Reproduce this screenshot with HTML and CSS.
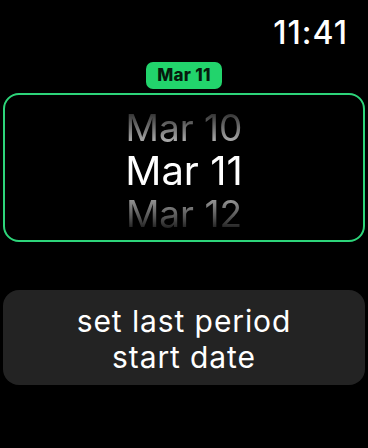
FILE: index.html
```html
<!DOCTYPE html>
<html>
<head>
<meta charset="utf-8">
<link rel="stylesheet" href="styles.css">
</head>
<body>
<div class="screen">
  <div class="status"><span class="time">11:41</span></div>
  <div class="badge-row"><span class="badge">Mar 11</span></div>
  <div class="picker">
    <div class="wheel">
      <div class="item side">Mar 10</div>
      <div class="item current">Mar 11</div>
      <div class="item side">Mar 12</div>
    </div>
  </div>
  <button class="action">set last period<br>start date</button>
</div>
</body>
</html>
```
FILE: styles.css
```css
html, body {
  margin: 0;
  padding: 0;
  background: #000;
}
.screen {
  width: 368px;
  height: 448px;
  background: #000;
  color: #fff;
  font-family: Inter, "Noto Sans", sans-serif;
  display: flex;
  flex-direction: column;
  overflow: hidden;
}
.status {
  display: flex;
  justify-content: flex-end;
  padding: 14px 20px 0 0;
}
.time {
  font-size: 32px;
  line-height: 37px;
  font-weight: 500;
  letter-spacing: 1px;
}
.badge-row {
  display: flex;
  justify-content: center;
  margin-top: 11px;
}
.badge {
  background: #22d46c;
  color: #061a0d;
  font-weight: 800;
  font-size: 17px;
  line-height: 27px;
  height: 27px;
  padding: 0 11px;
  border-radius: 7px;
  letter-spacing: 0.3px;
}
.picker {
  margin: 4px 3px 0;
  height: 149px;
  box-sizing: border-box;
  border: 2.5px solid #2dd57a;
  border-radius: 16px;
  overflow: hidden;
}
.wheel {
  height: 100%;
  box-sizing: border-box;
  padding-top: 6px;
  display: flex;
  flex-direction: column;
  align-items: center;
  justify-content: center;
  -webkit-mask-image: linear-gradient(to bottom, rgba(0,0,0,0.1) 8%, rgba(0,0,0,0.45) 18%, rgba(0,0,0,0.9) 32%, #000 40%, #000 60%, rgba(0,0,0,0.9) 68%, rgba(0,0,0,0.45) 84%, rgba(0,0,0,0.1) 94%);
  mask-image: linear-gradient(to bottom, rgba(0,0,0,0.1) 8%, rgba(0,0,0,0.45) 18%, rgba(0,0,0,0.9) 32%, #000 40%, #000 60%, rgba(0,0,0,0.9) 68%, rgba(0,0,0,0.45) 84%, rgba(0,0,0,0.1) 94%);
}
.item {
  flex-shrink: 0;
  height: 43px;
  line-height: 43px;
  white-space: nowrap;
}
.current {
  font-size: 40px;
  color: #fff;
}
.side {
  font-size: 37px;
  color: #bdbdbd;
}
.action {
  margin: 48px 3px 0;
  height: 95px;
  box-sizing: border-box;
  padding: 13px 0 10px;
  border: none;
  border-radius: 16px;
  background: #232323;
  color: #fff;
  font-family: Inter, "Noto Sans", sans-serif;
  font-size: 30px;
  line-height: 36px;
  letter-spacing: 0.9px;
  text-align: center;
}
```
